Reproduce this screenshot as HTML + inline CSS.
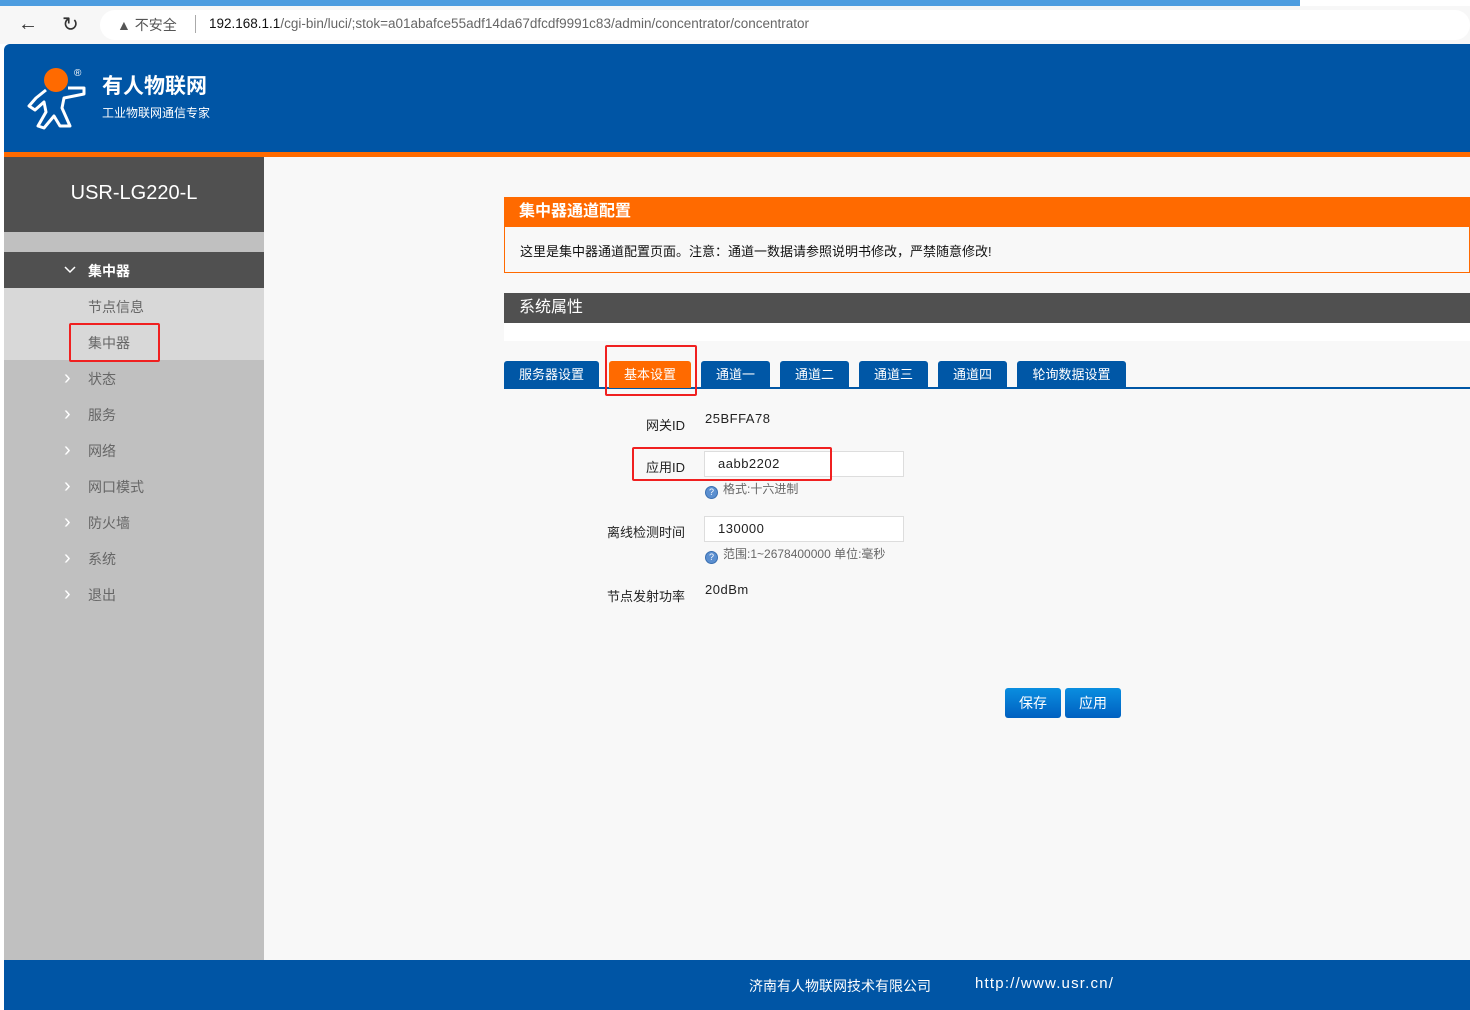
<!DOCTYPE html>
<html><head><meta charset="utf-8"><style>
*{margin:0;padding:0;box-sizing:border-box}
body{width:1470px;height:1010px;position:relative;overflow:hidden;background:#fff;font-family:"Liberation Sans","Noto Sans CJK SC",sans-serif;font-size:13px;color:#222}
.a{position:absolute}
.side .it{position:absolute;left:88px;font-size:14px;color:#666}
.side .ch{position:absolute;left:64px;color:#fff;font-size:20px;line-height:18px}
.tab{position:absolute;top:361px;height:27px;background:#0057a6;color:#fff;font-size:13px;line-height:28px;text-align:center;border-radius:3px 3px 0 0}
.lbl{position:absolute;font-size:13px;color:#222;text-align:right;width:120px;left:565px}
.inp{position:absolute;left:704px;width:200px;height:26px;border:1px solid #ddd;background:#fff;font-size:13px;padding-left:13px;line-height:24px;color:#222;letter-spacing:0.5px}
.hint{position:absolute;left:705px;font-size:12px;color:#666}
.hint i{display:inline-block;width:13px;height:13px;border-radius:50%;background:#5b8fd0;border:1px solid #3a6fb0;color:#fff;font-size:9px;font-style:normal;text-align:center;line-height:11px;vertical-align:-2px;margin-right:5px}
.btn{position:absolute;top:688px;height:30px;width:56px;background:linear-gradient(#0a8ee0,#0060c0);border-radius:3px;color:#fff;font-size:14px;text-align:center;line-height:30px}
.red{position:absolute;border:2px solid #f02020;border-radius:2px}
</style></head><body>
<div class="a" style="left:0;top:0;width:1300px;height:6px;background:#4d9de0"></div>
<div class="a" style="left:0;top:6px;width:1470px;height:38px;background:#f7f7f7"></div>
<div class="a" style="left:100px;top:10px;width:1370px;height:30px;background:#fff;border-radius:15px"></div>
<div class="a" style="left:18px;top:13px;font-size:20px;color:#333">←</div>
<div class="a" style="left:62px;top:12px;font-size:20px;color:#333">↻</div>
<div class="a" style="left:117px;top:15px;font-size:14px;color:#555">▲ 不安全</div>
<div class="a" style="left:195px;top:15px;width:1px;height:18px;background:#aaa"></div>
<div class="a" style="left:209px;top:16px;font-size:13.5px;color:#666"><span style="color:#111">192.168.1.1</span>/cgi-bin/luci/;stok=a01abafce55adf14da67dfcdf9991c83/admin/concentrator/concentrator</div>
<div class="a" style="left:4px;top:44px;width:1466px;height:108px;background:#0055a5;border-radius:6px 0 0 0"></div>
<div class="a" style="left:4px;top:152px;width:1466px;height:5px;background:#ff6a00"></div>
<svg class="a" style="left:26px;top:64px" width="64" height="68" viewBox="0 0 64 68"><circle cx="30" cy="16" r="12" fill="#ff6a00"/><path d="M20 26 L10 34 L3 42 L9 46 L18 38 L20 48 L12 62 L18 64 L28 52 L34 62 L44 62 L36 44 L38 34 L58 30 L58 24 L42 24" fill="none" stroke="#fff" stroke-width="3" stroke-linejoin="round"/><text x="48" y="12" font-size="10" fill="#fff">®</text></svg>
<div class="a" style="left:102px;top:70px;font-size:21px;font-weight:bold;color:#fff">有人物联网</div>
<div class="a" style="left:102px;top:104px;font-size:12px;color:#fff">工业物联网通信专家</div>
<div class="side">
<div class="a" style="left:4px;top:157px;width:260px;height:803px;background:#c0c0c0"></div>
<div class="a" style="left:4px;top:157px;width:260px;height:75px;background:#505050"></div>
<div class="a" style="left:4px;top:182px;width:260px;text-align:center;color:#fff;font-size:20px">USR-LG220-L</div>
<div class="a" style="left:4px;top:252px;width:260px;height:36px;background:#505050"></div>
<div class="a" style="left:4px;top:288px;width:260px;height:72px;background:#d8d8d8"></div>
<svg class="a" style="left:63px;top:265px" width="14" height="10"><path d="M2 2 L7 7 L12 2" fill="none" stroke="#fff" stroke-width="1.5"/></svg>
<div class="it" style="top:261px;color:#fff;font-weight:bold">集中器</div>
<div class="it" style="top:297px">节点信息</div>
<div class="it" style="top:333px">集中器</div>
<div class="red" style="left:69px;top:323px;width:91px;height:39px"></div>
<div class="ch" style="top:369px">›</div><div class="it" style="top:369px">状态</div>
<div class="ch" style="top:405px">›</div><div class="it" style="top:405px">服务</div>
<div class="ch" style="top:441px">›</div><div class="it" style="top:441px">网络</div>
<div class="ch" style="top:477px">›</div><div class="it" style="top:477px">网口模式</div>
<div class="ch" style="top:513px">›</div><div class="it" style="top:513px">防火墙</div>
<div class="ch" style="top:549px">›</div><div class="it" style="top:549px">系统</div>
<div class="ch" style="top:585px">›</div><div class="it" style="top:585px">退出</div>
</div>
<div class="a" style="left:264px;top:157px;width:1206px;height:803px;background:#f8f8f8"></div>
<div class="a" style="left:504px;top:197px;width:966px;height:76px;border:1px solid #ff6a00;background:#f8f8f8"></div>
<div class="a" style="left:504px;top:197px;width:966px;height:30px;background:#ff6a00;color:#fff;font-size:16px;font-weight:bold;padding-left:15px;line-height:30px">集中器通道配置</div>
<div class="a" style="left:520px;top:241px;font-size:13px;color:#111">这里是集中器通道配置页面。注意：通道一数据请参照说明书修改，严禁随意修改!</div>
<div class="a" style="left:504px;top:293px;width:966px;height:30px;background:#505050;color:#fff;font-size:16px;padding-left:15px;line-height:30px">系统属性</div>
<div class="a" style="left:504px;top:323px;width:966px;height:18px;background:#fff"></div>
<div class="a" style="left:504px;top:387px;width:966px;height:2px;background:#0057a6"></div>
<div class="tab" style="left:504px;width:95px">服务器设置</div>
<div class="tab" style="left:609px;width:82px;background:#ff6a00">基本设置</div>
<div class="red" style="left:605px;top:345px;width:92px;height:51px"></div>
<div class="tab" style="left:701px;width:69px">通道一</div>
<div class="tab" style="left:780px;width:69px">通道二</div>
<div class="tab" style="left:859px;width:69px">通道三</div>
<div class="tab" style="left:938px;width:69px">通道四</div>
<div class="tab" style="left:1017px;width:109px">轮询数据设置</div>
<div class="lbl" style="top:415px">网关ID</div>
<div class="a" style="left:705px;top:411px;font-size:13px;letter-spacing:0.5px">25BFFA78</div>
<div class="lbl" style="top:457px">应用ID</div>
<div class="inp" style="top:451px">aabb2202</div>
<div class="red" style="left:632px;top:447px;width:200px;height:34px"></div>
<div class="hint" style="top:480px"><i>?</i>格式:十六进制</div>
<div class="lbl" style="top:522px">离线检测时间</div>
<div class="inp" style="top:516px">130000</div>
<div class="hint" style="top:545px"><i>?</i>范围:1~2678400000 单位:毫秒</div>
<div class="lbl" style="top:586px">节点发射功率</div>
<div class="a" style="left:705px;top:582px;font-size:13px;letter-spacing:0.5px">20dBm</div>
<div class="btn" style="left:1005px">保存</div>
<div class="btn" style="left:1065px">应用</div>
<div class="a" style="left:4px;top:960px;width:1466px;height:50px;background:#0055a5"></div>
<div class="a" style="left:749px;top:976px;color:#fff;font-size:14px">济南有人物联网技术有限公司</div>
<div class="a" style="left:975px;top:975px;color:#fff;font-size:15px;letter-spacing:1.2px">http://www.usr.cn/</div>
</body></html>
